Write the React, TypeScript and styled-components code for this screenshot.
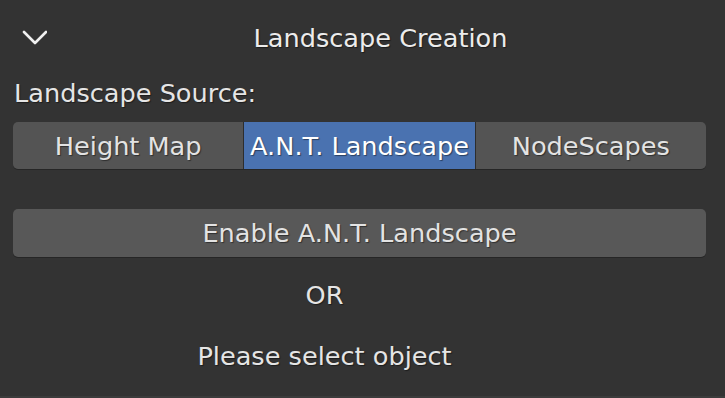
import styled, { createGlobalStyle } from "styled-components";

const GlobalStyle = createGlobalStyle`
  html, body {
    margin: 0;
    padding: 0;
    background: #333333;
  }
  body {
    font-family: "DejaVu Sans", "Noto Sans", sans-serif;
    color: #e5e5e5;
  }
`;

const Panel = styled.div`
  width: 725px;
  height: 398px;
  box-sizing: border-box;
  background: #333333;
  border-bottom: 2px solid #3c3c3c;
  padding: 0 19px 0 13px;
  display: flex;
  flex-direction: column;
  font-size: 25.6px;
  text-shadow: 1px 1px 1px rgba(0, 0, 0, 0.45);
`;

const Header = styled.div`
  height: 76px;
  display: flex;
  align-items: center;
`;

const Chevron = styled.svg`
  width: 34px;
  height: 20px;
  flex: none;
`;

const Title = styled.div`
  flex: 1;
  text-align: center;
  padding-left: 8px;
  color: #ececec;
`;

const Label = styled.div`
  height: 34px;
  line-height: 34px;
  padding-left: 1px;
`;

const Segmented = styled.div`
  margin-top: 12px;
  height: 47px;
  display: flex;
  border-radius: 5px;
  overflow: hidden;
  box-shadow: 0 1px 0 #262626;
`;

const Segment = styled.div<{ $active?: boolean }>`
  flex: 1;
  display: flex;
  align-items: center;
  justify-content: center;
  background: ${(p) => (p.$active ? "#4a72b0" : "#545454")};
  color: ${(p) => (p.$active ? "#ffffff" : "#e3e3e3")};
  & + & {
    border-left: 1px solid #2d2d2d;
  }
`;

const Button = styled.div`
  margin-top: 40px;
  height: 48px;
  display: flex;
  align-items: center;
  justify-content: center;
  background: #585858;
  border-radius: 5px;
  box-shadow: 0 1px 0 #262626;
  color: #e3e3e3;
`;

const Note = styled.div<{ $h: number }>`
  height: ${(p) => p.$h}px;
  display: flex;
  align-items: center;
  justify-content: center;
  padding-right: 70px;
`;

export default function App() {
  return (
    <>
      <GlobalStyle />
      <Panel>
        <Header>
          <Chevron viewBox="0 0 34 20">
            <polyline
              points="11,4 22,15 33,4"
              fill="none"
              stroke="#f0f0f0"
              strokeWidth="2.6"
              strokeLinecap="round"
              strokeLinejoin="round"
            />
          </Chevron>
          <Title>Landscape Creation</Title>
        </Header>
        <Label>Landscape Source:</Label>
        <Segmented>
          <Segment>Height Map</Segment>
          <Segment $active>A.N.T. Landscape</Segment>
          <Segment>NodeScapes</Segment>
        </Segmented>
        <Button>Enable A.N.T. Landscape</Button>
        <Note $h={76}>OR</Note>
        <Note $h={46}>Please select object</Note>
      </Panel>
    </>
  );
}
